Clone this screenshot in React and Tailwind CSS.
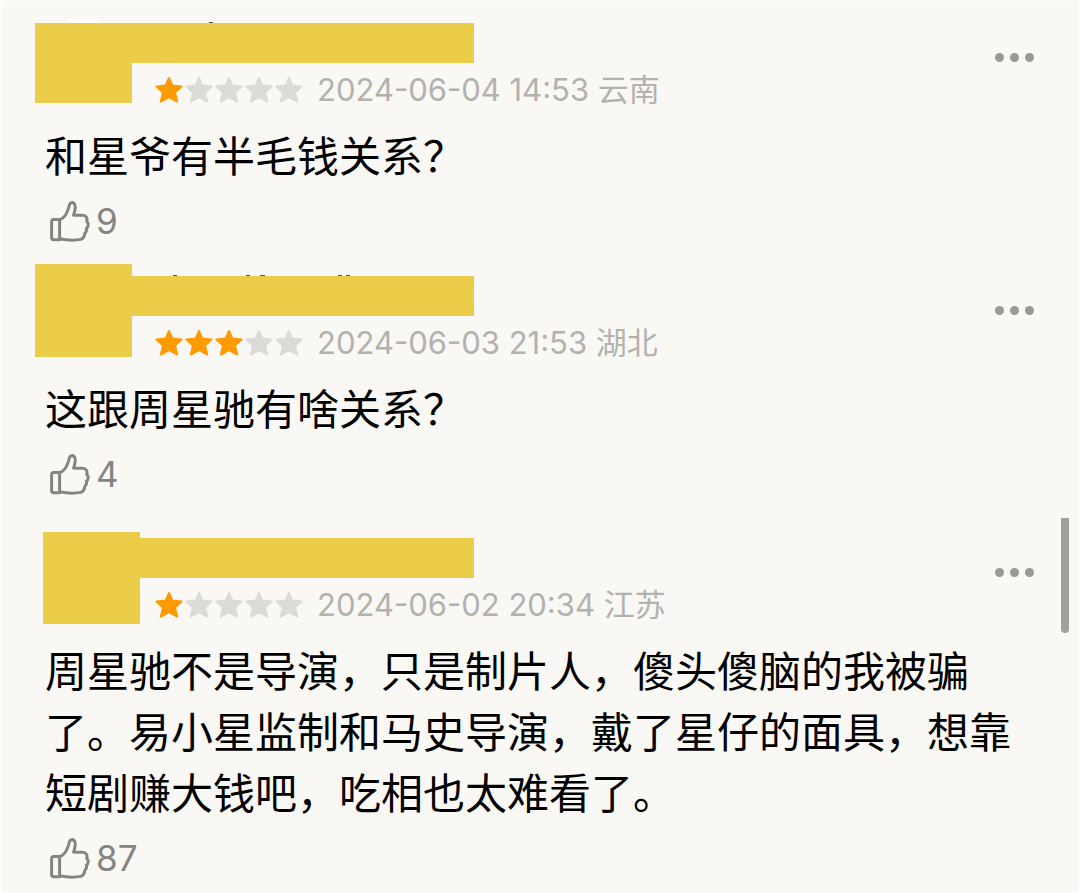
const reviews = [
  {
    id: 1,
    score: 1,
    date: "2024-06-04 14:53",
    city: "云南",
    text: "和星爷有半毛钱关系？",
    likes: 9,
    spacing: "pt-[22px] pl-8",
    avatar: "h-20",
    body: "",
    name: "w-[342px]",
    meta: "pl-[23px]",
    marks: [[77, 4]],
    halo: true,
  },
  {
    id: 2,
    score: 3,
    date: "2024-06-03 21:53",
    city: "湖北",
    text: "这跟周星驰有啥关系？",
    likes: 4,
    spacing: "pt-[21px] pl-8",
    avatar: "h-[93px]",
    body: "pt-3",
    name: "w-[342px]",
    meta: "pl-[23px]",
    marks: [[41, 4], [114, 4], [128, 5], [206, 4], [214, 4]],
  },
  {
    id: 3,
    score: 1,
    date: "2024-06-02 20:34",
    city: "江苏",
    text: "周星驰不是导演，只是制片人，傻头傻脑的我被骗了。易小星监制和马史导演，戴了星仔的面具，想靠短剧赚大钱吧，吃相也太难看了。",
    likes: 87,
    spacing: "pt-9 pl-10",
    avatar: "h-[92px]",
    body: "pt-1.5",
    name: "w-[334px]",
    meta: "pl-[15px]",
    marks: [],
  },
];

const Star = ({ active }) => (
  <svg
    viewBox="0 0 28 28"
    className={`h-7 w-7 ${active ? "text-[#ff9a00]" : "text-[#dcdbd8]"}`}
    fill="currentColor"
    stroke="currentColor"
    strokeWidth="2"
    strokeLinejoin="round"
    aria-hidden="true"
  >
    <path d="M14 2 L17.4 9.6 L26.6 10.4 L20 16.4 L22.2 25.6 L14 21.2 L5.8 25.6 L8 16.4 L1.4 10.4 L10.6 9.6 Z" />
  </svg>
);

const ThumbUp = () => (
  <svg
    viewBox="0 0 40 41"
    className="h-[41px] w-10"
    fill="none"
    stroke="currentColor"
    strokeWidth="3"
    strokeLinecap="round"
    strokeLinejoin="round"
    aria-hidden="true"
  >
    <path d="M3.6 18.6 H9.6 V38.8 H3.8 Q1.6 38.8 1.6 36.6 V20.8 Q1.6 18.6 3.6 18.6 Z" />
    <path d="M9.6 18.6 C13.2 17.6 16.4 13.6 18 8.6 L19.6 3.4 C20.2 1.4 22.6 1.1 24 2.4 C26 4.4 25.6 8.4 23.6 14.2 L32.6 14.2 C36.4 14.4 37.6 17.2 36.8 20.4 C39 22.8 38.4 25.6 36.4 27.4 C37 29.6 36.4 31 34.8 32.4 C34.6 35.4 33.4 37.4 30.8 38.4 C24.4 39.6 16.4 39.2 9.6 37.8" />
  </svg>
);

const Review = ({ review }) => {
  const { score, date, city, text, likes, spacing, avatar, body, name, meta, marks, halo } = review;

  return (
    <article>
      <header className={`flex items-start ${spacing}`}>
        <div className={`relative w-[97px] shrink-0 bg-[#ebcd4a] ${avatar}`}>
          {halo && (
            <span className="absolute -top-1 left-8 h-1 w-8 rounded-t-full bg-white" />
          )}
        </div>
        <div className={`flex min-w-0 flex-1 items-start justify-between ${body}`}>
          <div>
            <div className={`relative h-10 bg-[#ebcd4a] ${name}`}>
              {/* tips of the hidden user name */}
              <svg className="absolute bottom-full left-0 h-0.5 w-full" aria-hidden="true">
                {marks.map(([x, width]) => (
                  <rect key={x} x={x} y="1" width={width} height="1" fill="#55534a" />
                ))}
              </svg>
            </div>
            <div className={`mt-[7px] flex h-10 items-center ${meta}`}>
              <div className="flex gap-0.5" role="img" aria-label={`${score} / 5`}>
                {[1, 2, 3, 4, 5].map((n) => (
                  <Star key={n} active={n <= score} />
                ))}
              </div>
              <time className="ml-3.5 whitespace-nowrap text-[31px] leading-10 text-[#b3b2af]">
                {date} {city}
              </time>
            </div>
          </div>
          <button
            type="button"
            aria-label="更多"
            className="mr-11 flex h-[68px] items-center gap-1.5"
          >
            <span className="h-[9px] w-[9px] rounded-full bg-[#9a9997]" />
            <span className="h-[9px] w-[9px] rounded-full bg-[#9a9997]" />
            <span className="h-[9px] w-[9px] rounded-full bg-[#9a9997]" />
          </button>
        </div>
      </header>
      <p className="mt-4 pr-9 pl-[42px] text-[42px] leading-[61px] text-black">{text}</p>
      <button
        type="button"
        className="mt-3 ml-[47px] flex h-11 items-center gap-1.5 text-[35px] leading-[44px] text-[#858481]"
      >
        <ThumbUp />
        <span>{likes}</span>
      </button>
    </article>
  );
};

const App = () => {
  return (
    <main
      lang="zh-CN"
      className="relative min-h-screen border-t border-r-2 border-b border-l-3 border-[#fdfdfb] bg-[#f9f8f4] font-['Inter','Noto_Sans_CJK_SC',sans-serif]"
    >
      {reviews.map((review) => (
        <Review key={review.id} review={review} />
      ))}
      <div className="absolute top-[517px] right-[9px] h-[115px] w-2 rounded-b-full bg-[#a09f9c]" />
    </main>
  );
};

export default App;
